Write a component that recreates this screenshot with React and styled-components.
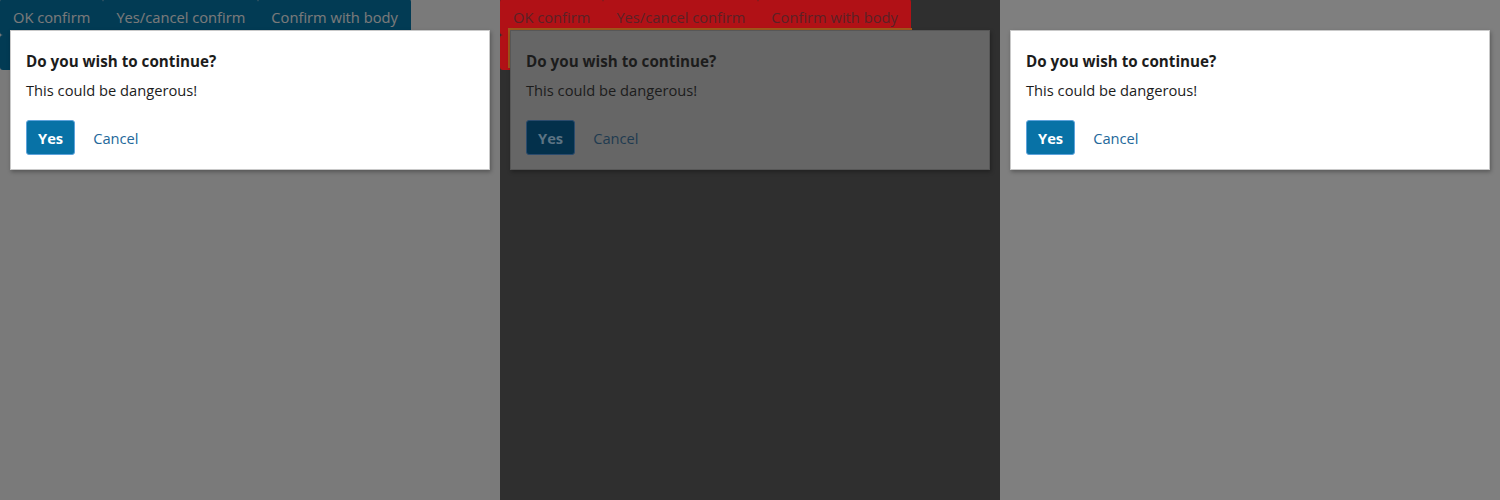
import React from "react";
import styled, { createGlobalStyle, css } from "styled-components";

const GlobalStyle = createGlobalStyle`
  html, body {
    margin: 0;
    padding: 0;
    background: #2f2f2f;
  }
  body {
    font-family: "Open Sans", "Noto Sans", sans-serif;
  }
`;

const Stage = styled.div`
  display: grid;
  grid-template-columns: repeat(3, 500px);
  height: 500px;
  overflow: hidden;
`;

const Panel = styled.div`
  position: relative;
  height: 500px;
  overflow: hidden;
  background: ${(p) => (p.$tone === "dark" ? "#2f2f2f" : "#ffffff")};
`;

const ButtonBar = styled.div`
  display: flex;
  flex-wrap: wrap;
  width: 411px;
  margin-top: -1px;
`;

const BarButton = styled.button`
  height: 36px;
  padding: 0 13px;
  border: none;
  border-radius: 3px;
  font-family: "Open Sans", "Noto Sans", sans-serif;
  font-size: 14.7px;
  cursor: pointer;
  background: ${(p) => (p.$tone === "dark" ? "#b11116" : "#067bb0")};
  color: ${(p) => (p.$tone === "dark" ? "#5a2226" : "#ffffff")};
  ${(p) =>
    p.$wide &&
    css`
      flex-basis: 100%;
      height: 35px;
    `}
`;

const FocusRing = styled.div`
  position: absolute;
  left: 8px;
  top: 28px;
  width: 404px;
  height: 40px;
  border: 2px solid #a0581c;
  box-sizing: border-box;
`;

const Overlay = styled.div`
  position: absolute;
  inset: 0;
  padding: 30px 10px;
  background: ${(p) =>
    p.$tone === "light"
      ? "rgba(0, 0, 0, 0.52)"
      : p.$tone === "blank"
      ? "rgba(0, 0, 0, 0.5)"
      : "transparent"};
`;

const Dialog = styled.div`
  box-sizing: border-box;
  width: 480px;
  height: 140px;
  padding: 19px 16px 14px 15px;
  border: 1px solid ${(p) => (p.$dim ? "#575757" : "#c9c9c9")};
  background: ${(p) => (p.$dim ? "#666666" : "#ffffff")};
  box-shadow: 1px 2px 4px rgba(0, 0, 0, 0.3);
  color: #1c1c1c;
`;

const Title = styled.h2`
  margin: 0 0 8px;
  font-size: 15.2px;
  line-height: 22px;
  font-weight: 700;
`;

const Message = styled.p`
  margin: 0 0 19px;
  font-size: 14.7px;
  line-height: 21px;
`;

const Actions = styled.div`
  display: flex;
  align-items: center;
  gap: 18px;
`;

const PrimaryButton = styled.button`
  box-sizing: border-box;
  height: 35px;
  padding: 0 11px;
  border-radius: 3px;
  font-family: "Open Sans", "Noto Sans", sans-serif;
  font-size: 14.7px;
  font-weight: 700;
  border: 1px solid ${(p) => (p.$dim ? "#2a4a6c" : "#5ea3dc")};
  background: ${(p) => (p.$dim ? "#03304b" : "#0872a6")};
  color: ${(p) => (p.$dim ? "#5c7383" : "#ffffff")};
`;

const LinkButton = styled.button`
  padding: 0;
  border: none;
  background: none;
  font-family: "Open Sans", "Noto Sans", sans-serif;
  font-size: 14.7px;
  color: ${(p) => (p.$dim ? "#1f3b50" : "#23689a")};
`;

const ConfirmDialog = ({ dim }) => (
  <Dialog $dim={dim}>
    <Title>Do you wish to continue?</Title>
    <Message>This could be dangerous!</Message>
    <Actions>
      <PrimaryButton $dim={dim}>Yes</PrimaryButton>
      <LinkButton $dim={dim}>Cancel</LinkButton>
    </Actions>
  </Dialog>
);

const DemoButtons = ({ tone }) => (
  <ButtonBar>
    <BarButton $tone={tone}>OK confirm</BarButton>
    <BarButton $tone={tone}>Yes/cancel confirm</BarButton>
    <BarButton $tone={tone}>Confirm with body</BarButton>
    <BarButton $tone={tone} $wide aria-label="Confirm with focus" />
  </ButtonBar>
);

const App = () => (
  <>
    <GlobalStyle />
    <Stage>
      <Panel $tone="light">
        <DemoButtons tone="light" />
        <Overlay $tone="light">
          <ConfirmDialog />
        </Overlay>
      </Panel>
      <Panel $tone="dark">
        <DemoButtons tone="dark" />
        <FocusRing />
        <Overlay $tone="dark">
          <ConfirmDialog dim />
        </Overlay>
      </Panel>
      <Panel $tone="blank">
        <Overlay $tone="blank">
          <ConfirmDialog />
        </Overlay>
      </Panel>
    </Stage>
  </>
);

export default App;
